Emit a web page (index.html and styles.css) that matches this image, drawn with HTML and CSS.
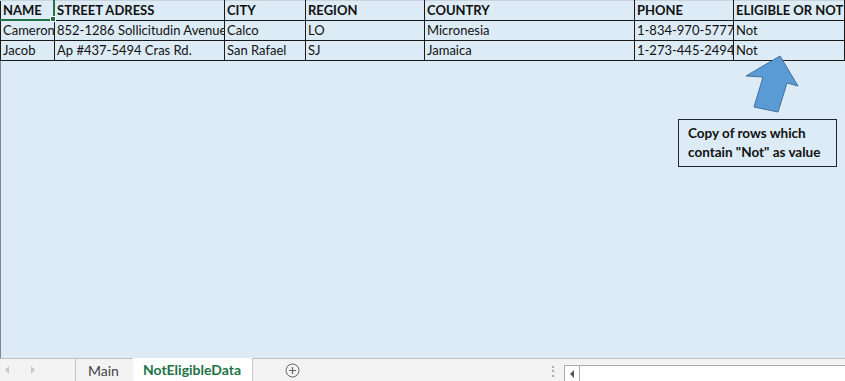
FILE: index.html
```html
<!DOCTYPE html>
<html lang="en">

<head>
    <meta charset="UTF-8">
    <title>NotEligibleData</title>
    <link rel="stylesheet" href="styles.css">
</head>

<body>
    <div class="workbook">
        <div class="sheet">
            <table class="grid">
                <colgroup>
                    <col style="width:54px">
                    <col style="width:170px">
                    <col style="width:81px">
                    <col style="width:119px">
                    <col style="width:210px">
                    <col style="width:99px">
                    <col style="width:111px">
                </colgroup>
                <tr class="head">
                    <td>NAME</td>
                    <td>STREET ADRESS</td>
                    <td>CITY</td>
                    <td>REGION</td>
                    <td>COUNTRY</td>
                    <td>PHONE</td>
                    <td>ELIGIBLE OR NOT</td>
                </tr>
                <tr>
                    <td>Cameron</td>
                    <td>852-1286 Sollicitudin Avenue</td>
                    <td>Calco</td>
                    <td>LO</td>
                    <td>Micronesia</td>
                    <td>1-834-970-5777</td>
                    <td>Not</td>
                </tr>
                <tr>
                    <td>Jacob</td>
                    <td>Ap #437-5494 Cras Rd.</td>
                    <td>San Rafael</td>
                    <td>SJ</td>
                    <td>Jamaica</td>
                    <td>1-273-445-2494</td>
                    <td>Not</td>
                </tr>
            </table>

            <!-- active cell A1 -->
            <div class="selection"><span class="handle"></span></div>

            <!-- floating shapes -->
            <svg class="arrow" width="60" height="62" viewBox="0 0 60 62">
                <polygon points="35,1 53,31 42,28 33,57 9,52 18,22 1,21" fill="#5b9bd5" stroke="#41719c" stroke-width="1"/>
            </svg>
            <div class="callout">Copy of rows which<br>contain "Not" as value</div>
        </div>

        <div class="tabbar">
            <div class="nav">
                <span class="tri left"></span>
                <span class="tri right"></span>
            </div>
            <div class="tab">Main</div>
            <div class="tab active">NotEligibleData</div>
            <div class="add">
                <svg width="15" height="15" viewBox="0 0 15 15">
                    <circle cx="7.5" cy="7.5" r="6.5" fill="none" stroke="#666" stroke-width="1"/>
                    <path d="M7.5 4v7M4 7.5h7" stroke="#666" stroke-width="1.2"/>
                </svg>
            </div>
            <div class="spacer"></div>
            <div class="grip">&#8942;</div>
            <div class="hscroll">
                <span class="scroll-btn"><span class="tri left dark"></span></span>
            </div>
        </div>
    </div>
</body>

</html>
```

FILE: styles.css
```css
/* General styles */
body {
    margin: 0;
    padding: 0;
    font-family: Lato, "Liberation Sans", Arial, sans-serif;
    font-size: 13px;
    color: #111;
    background: #dcebf6;
}

.workbook {
    width: 845px;
    height: 381px;
    display: flex;
    flex-direction: column;
    overflow: hidden;
}

/* Sheet area */
.sheet {
    flex: 1;
    position: relative;
    background: #dcebf6;
    border-left: 1px solid #7f8790;
    border-top: 1px solid #c9d3dc;
}

.grid {
    border-collapse: collapse;
    table-layout: fixed;
    width: 844px;
    margin-left: -1px;
    margin-top: -1px;
}

.grid td {
    height: 19px;
    padding: 0 2px;
    border: 1px solid #1a1a1a;
    white-space: nowrap;
    overflow: hidden;
    line-height: 19px;
    vertical-align: bottom;
}

.grid .head td {
    font-weight: bold;
    border-top-color: #c9d3dc;
}

.selection {
    position: absolute;
    left: -1px;
    top: -1px;
    width: 53px;
    height: 19px;
    border: 2px solid #217346;
    border-left: none;
    border-top: none;
}

.handle {
    position: absolute;
    right: -3px;
    bottom: -3px;
    width: 4px;
    height: 4px;
    background: #217346;
    border: 1px solid #fff;
}

.arrow {
    position: absolute;
    left: 744px;
    top: 54px;
}

.callout {
    position: absolute;
    left: 677px;
    top: 118px;
    width: 139px;
    padding: 4px 9px;
    border: 1px solid #1f2630;
    font-weight: bold;
    font-size: 13.5px;
    line-height: 19px;
    color: #111;
}

/* Sheet tabs */
.tabbar {
    height: 22px;
    display: flex;
    align-items: stretch;
    background: #f3f3f3;
    border-top: 1px solid #bfbfbf;
    font-size: 14px;
}

.nav {
    width: 76px;
    display: flex;
    align-items: center;
    gap: 22px;
    padding-left: 5px;
    box-sizing: border-box;
    border-right: 1px solid #c6c6c6;
}

.tri {
    width: 0;
    height: 0;
    border-top: 4px solid transparent;
    border-bottom: 4px solid transparent;
}

.tri.left {
    border-right: 4px solid #c8c8c8;
}

.tri.right {
    border-left: 4px solid #c8c8c8;
}

.tri.dark {
    border-right-color: #555;
}

.tab {
    padding: 0 14px 0 12px;
    display: flex;
    align-items: center;
    color: #444;
}

.tab.active {
    width: 120px;
    box-sizing: border-box;
    padding: 0 10px;
    margin-top: -2px;
    background: #fff;
    color: #217346;
    font-weight: bold;
    border-right: 1px solid #c6c6c6;
}

.add {
    width: 80px;
    display: flex;
    align-items: center;
    justify-content: center;
}

.spacer {
    flex: 1;
}

.grip {
    width: 18px;
    display: flex;
    align-items: center;
    color: #999;
    font-size: 14px;
}

.hscroll {
    width: 280px;
    margin-top: 6px;
    background: #fff;
    border: 1px solid #ababab;
    border-right: none;
    border-bottom: none;
}

.scroll-btn {
    width: 14px;
    height: 100%;
    display: flex;
    align-items: center;
    justify-content: center;
    border-right: 1px solid #ababab;
}
```
